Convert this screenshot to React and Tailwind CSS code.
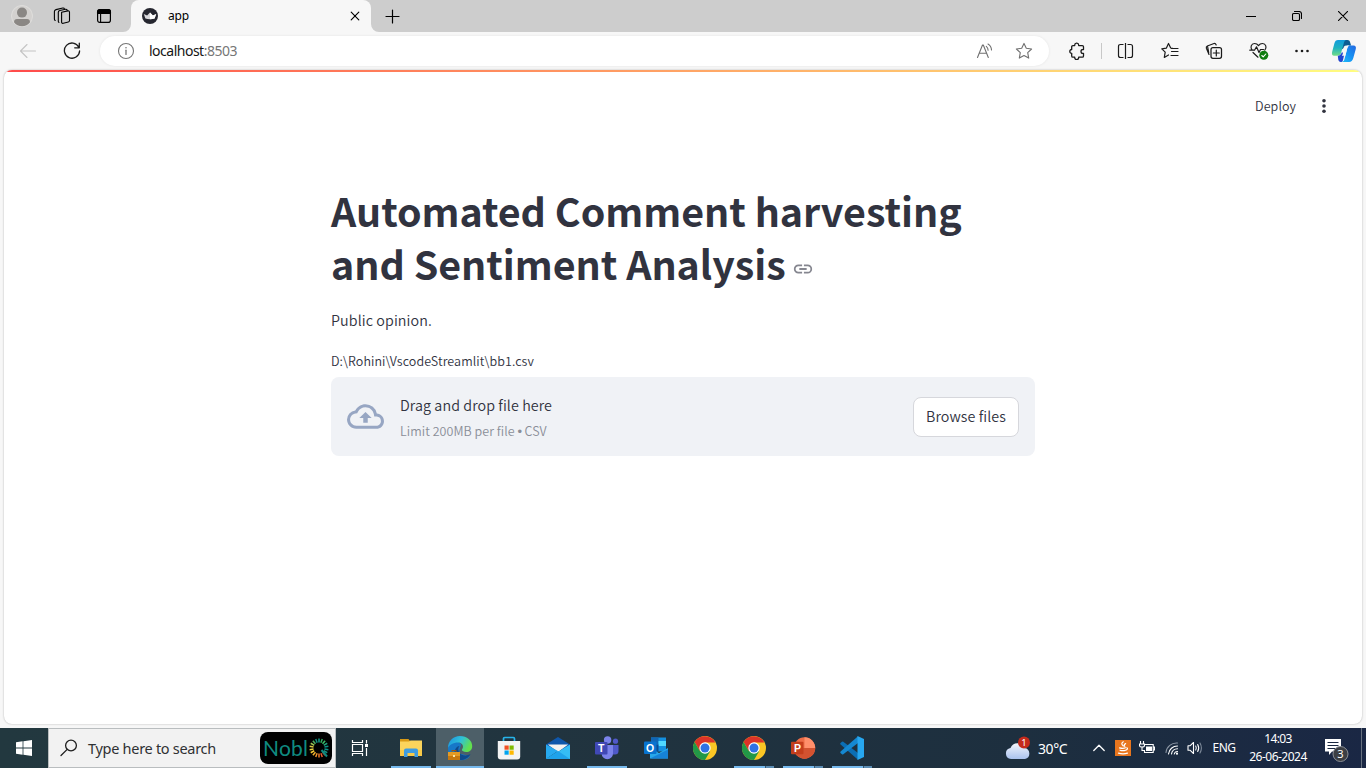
import React from "react";

const Slot = ({ className = "", children }) => (
  <div className={`flex shrink-0 items-center justify-center ${className}`}>{children}</div>
);

const Icon = ({ size = 18, className = "", children, viewBox }) => (
  <svg
    width={size}
    height={size}
    viewBox={viewBox || `0 0 ${size} ${size}`}
    className={`block shrink-0 ${className}`}
    fill="none"
    stroke="currentColor"
    strokeWidth="1.1"
    strokeLinecap="round"
    strokeLinejoin="round"
  >
    {children}
  </svg>
);

const ProfileIcon = () => (
  <Icon size={22}>
    <circle cx="11" cy="11" r="10.5" fill="#d3d1cf" stroke="#dddcda" />
    <circle cx="11" cy="7.6" r="5" fill="#8a8784" stroke="none" />
    <path d="M3 17.2c0-2 1.200-3.200 3-3.200h10c1.800 0 3 1.200 3 3.200a10 10 0 0 1-16 0z" fill="#8a8784" stroke="none" />
  </Icon>
);

const WorkspacesIcon = () => (
  <Icon size={18}>
    <path d="M8.600 5.300l6.300-1.400q1.600-.3 1.600 1.300v8.300q0 1.200-1.200 1.500l-5 1.300q-1.700.4-1.700-1.300z" />
    <path d="M14.200 3.500q-.2-1.500-1.700-1.200L6.800 3.500q-1.500.4-1.500 1.800v9q0 .8.700 1.100" />
    <path d="M11.400 1.900q-.3-1.200-1.600-.9L3 2.600Q1.400 3 1.400 4.600v7.500q0 1 .8 1.400" />
  </Icon>
);

const TabActionsIcon = () => (
  <Icon size={16}>
    <rect x="1.600" y="1.600" width="12.800" height="12.800" rx="2.200" strokeWidth="1.200" />
    <path d="M1.500 5.500V4a2.500 2.500 0 0 1 2.500-2.500h8A2.500 2.500 0 0 1 14.500 4v1.500z" fill="currentColor" stroke="currentColor" />
    <path d="M4.600 6v8" />
  </Icon>
);

const CrownIcon = () => (
  <Icon size={16}>
    <circle cx="8" cy="8" r="8" fill="#262730" stroke="none" />
    <path d="M1.800 6l3.300 1.400L8 4.400l2.900 3L14.200 6l-1.600 4.500c-2.800 1-6.400 1-9.200 0z" fill="#d9d9dc" stroke="none" />
    <path d="M8 4.400l2.900 3L14.200 6l-1.600 4.500c-1.400.5-3 .7-4.600.7z" fill="#fff" stroke="none" />
  </Icon>
);

const TitleBar = () => (
  <div className="flex h-8 w-full items-stretch bg-[#cdcdcd] text-black">
    <Slot className="w-[44px]"><ProfileIcon /></Slot>
    <Slot className="w-[36px]"><WorkspacesIcon /></Slot>
    <Slot className="w-[43px] pl-[5px]"><TabActionsIcon /></Slot>
    <svg width="8" height="32" viewBox="0 0 8 32" className="block shrink-0"><path d="M8 24a8 8 0 0 1-8 8h8z" fill="#f7f7f7" /></svg>
    <div className="flex w-[240px] items-center rounded-t-lg bg-[#f7f7f7] pl-[11px] pr-[11px]">
      <CrownIcon />
      <span className="ml-[10px] flex-1 font-['Noto_Sans',sans-serif] text-[12px] leading-4 tracking-[-0.2px]">app</span>
      <Icon size={10}><path d="M1.200 1.200l7.600 7.600M8.800 1.200l-7.600 7.600" strokeWidth="1.150" /></Icon>
    </div>
    <svg width="8" height="32" viewBox="0 0 8 32" className="block shrink-0"><path d="M0 24a8 8 0 0 0 8 8H0z" fill="#f7f7f7" /></svg>
    <Slot className="w-[27px]"><Icon size={15}><path d="M1 7.500h13M7.500 1v13" strokeWidth="1.200" /></Icon></Slot>
    <div className="flex-1" />
    <Slot className="w-[46px]"><Icon size={10}><path d="M0 5.500h10" strokeLinecap="butt" strokeWidth="1" /></Icon></Slot>
    <Slot className="w-[46px]">
      <Icon size={10}>
        <rect x=".5" y="2.500" width="7" height="7" rx="1.300" />
        <path d="M2.500.5H7A2.500 2.500 0 0 1 9.500 3v4.500" />
      </Icon>
    </Slot>
    <Slot className="w-[46px]"><Icon size={10}><path d="M.3.3l9.400 9.400M9.700.3L.3 9.700" /></Icon></Slot>
  </div>
);

const starPath = "M9 1.400l2.300 4.900 5.300.7-3.900 3.700 1 5.400L9 13.500l-4.700 2.600 1-5.400L1.400 7l5.300-.7z";

const CopilotIcon = () => (
  <svg width="26" height="24" viewBox="0 0 26 24" className="block shrink-0">
    <defs>
      <linearGradient id="cpA" x1="0" y1="0" x2="0" y2="1"><stop offset="0" stopColor="#129bdc" /><stop offset=".5" stopColor="#1fb2c0" /><stop offset="1" stopColor="#74dd86" /></linearGradient>
      <linearGradient id="cpB" x1="1" y1="0" x2="0" y2="1"><stop offset="0" stopColor="#2568e0" /><stop offset=".5" stopColor="#1691f3" /><stop offset="1" stopColor="#20bdf8" /></linearGradient>
    </defs>
    <path d="M11 1h5.500c1.500 0 2.200.9 2.600 2.200l1 3.300h-3.500l-6 4z" fill="#0c5c92" />
    <path d="M7 1h8c-1.400.6-1.800 1.800-2.300 3.500l-2.500 9c-.6 2.200-1.700 3.300-4.200 3.300H3.200C1.200 16.800.6 15 1.100 13L3.500 4C4.100 2 5.100 1 7 1z" fill="url(#cpA)" />
    <path d="M6.800 16.800c2.200-.2 3.200-1.200 3.900-3.300h3l-1.700 7.500c-.4 1.400-1 2-2 2h-.2c-1.500 0-2.200-1-2.500-2.200z" fill="#2446cf" />
    <path d="M18 6.500h4.500c2 0 2.800 1.500 2.300 3.500L22.300 19c-.8 2.800-2 4-4.200 4h-7.600c2-.4 2.600-1.500 3.100-3.300L16 10.200c.4-1.800 1-2.900 2-3.700z" fill="url(#cpB)" />
    <path d="M12.800 7.800q1-1.300 2.800-1.300H18c-1 .8-1.600 1.900-2 3.700l-1.700 6.500h-3.500q.8-1 1-2z" fill="#f7f7f7" />
  </svg>
);

const Toolbar = () => (
  <div className="flex h-[38px] w-full items-center bg-[#f7f7f7] text-[#1b1b1b]">
    <Slot className="w-[56px] text-[#c4c4c4]"><Icon size={18}><path d="M16.500 9H1.500M8 2.500L1.500 9 8 15.500" /></Icon></Slot>
    <Slot className="w-[32px]">
      <Icon size={18}><path d="M15.800 5.200A7.600 7.600 0 1 0 16.600 9M16.300 1.200v4.600h-4.600" strokeWidth="1.300" /></Icon>
    </Slot>
    <div className="ml-3 flex h-[30px] w-[949px] items-center rounded-full bg-white pl-[17px] shadow-[0_0_3px_rgba(0,0,0,0.08)]">
      <Icon size={18} className="text-[#767676]"><circle cx="9" cy="9" r="7.500" /><path d="M9 8.200v4.200" strokeWidth="1.300" /><circle cx="9" cy="5.800" r=".8" fill="currentColor" stroke="none" /></Icon>
      <span className="ml-[14px] flex-1 font-['Noto_Sans',sans-serif] text-[14px] leading-5 tracking-[-0.500px] text-[#151515]">
        localhost<span className="text-[#767676]">:8503</span>
      </span>
      <Slot className="w-[39px] text-[#707070]">
        <Icon size={18}><path d="M1.500 15.500L6.500 3h.8l5 12.500M3.400 11.200h7.200" /><path d="M10.300 4.300q1.800 1.500 1.800 4M12 2q3.300 2 3.500 6" /></Icon>
      </Slot>
      <Slot className="w-[39px] text-[#707070]"><Icon size={18}><path d={starPath} /></Icon></Slot>
      <div className="w-[6px]" />
    </div>
    <Slot className="w-[52px] pl-[4px]">
      <Icon size={18}>
        <path d="M6.700 3.300a2 2 0 0 1 4-.2v.5h3.600c.7 0 1.200.5 1.200 1.200v2.700h-.6a1.900 1.900 0 0 0 0 3.800h.6V14c0 .7-.5 1.200-1.200 1.200h-3.600v.4a2 2 0 0 1-4 0v-.4H4.900c-.7 0-1.200-.5-1.200-1.200v-2.700a1.900 1.900 0 1 1 0-3.800V4.800c0-.7.5-1.200 1.200-1.200h1.800z" strokeWidth="1.300" />
      </Icon>
    </Slot>
    <div className="h-4 w-px bg-[#c8c8c8]" />
    <Slot className="w-[46px]">
      <svg width="17" height="18" viewBox="0 0 17 18" fill="none" stroke="currentColor" className="ml-px block"><path d="M6.500 2.500H3.500q-2 0-2 2v9q0 2 2 2h3M10.500 2.500h3q2 0 2 2v9q0 2-2 2h-3M8.500 1v16" strokeWidth="1.200" /></svg>
    </Slot>
    <Slot className="w-[44px]">
      <Icon size={18}><path d="M11.500 6.300L9.700 6 7.500 1.500 5.300 6.200.8 6.800l3.400 3.400-.9 5.200L7.500 13M10.500 6.500h6.500M10.500 9.500h6.500M10 13.500h7" strokeWidth="1.200" /></Icon>
    </Slot>
    <Slot className="w-[44px]">
      <Icon size={18}><rect x="6" y="5.500" width="10.500" height="10.800" rx="2" strokeWidth="1.250" /><path d="M11.300 8v6M8.300 11h6M4 12.500L1.400 6.200q-.5-1.600.9-2.200L9 1.500q1.500-.3 2.200 1.500M3.700 10.500L2.500 4" strokeWidth="1.200" /></Icon>
    </Slot>
    <Slot className="w-[44px] pl-px">
      <Icon size={20}>
        <path d="M3.200 9.200C.8 6.500 2.200 2.500 5.500 2.500c2 0 3.200 1 4 2.200.8-1.200 2-2.200 4-2.200 3.300 0 4.700 4 2.300 6.700M4 11.500l5 4.700M.8 9.200h4.700L7.500 5.800 10 11.500 11.500 8.500h3" strokeWidth="1.200" />
        <circle cx="14.800" cy="14.300" r="4.500" fill="#107c10" stroke="none" />
        <path d="M12.800 14.500l1.400 1.300 2.600-2.800" stroke="#fff" />
      </Icon>
    </Slot>
    <Slot className="w-[43px]"><Icon size={16}><g fill="currentColor" stroke="none"><circle cx="2.500" cy="8" r="1.300" /><circle cx="8" cy="8" r="1.300" /><circle cx="13.500" cy="8" r="1.300" /></g></Icon></Slot>
    <Slot className="w-[42px]"><CopilotIcon /></Slot>
  </div>
);

const sourceSans = "font-['Noto_Sans_CJK_SC',sans-serif]";

const Uploader = () => (
  <div className="mt-[5px] flex h-[79px] items-center rounded-lg bg-[#f0f2f6] px-4">
    <svg width="37" height="37" viewBox="0 0 24 24" className="block shrink-0" fill="#97a6c3">
      <path d="M19.350 10.040A7.490 7.490 0 0 0 12 4C9.110 4 6.600 5.640 5.350 8.040A5.994 5.994 0 0 0 0 14c0 3.310 2.690 6 6 6h13c2.760 0 5-2.240 5-5 0-2.640-2.050-4.780-4.650-4.960zM19 18H6c-2.210 0-4-1.790-4-4 0-2.050 1.530-3.760 3.560-3.970l1.070-.11.5-.95A5.469 5.469 0 0 1 12 6c2.620 0 4.880 1.860 5.390 4.430l.3 1.500 1.530.11A2.980 2.980 0 0 1 22 15c0 1.650-1.350 3-3 3zM8 13h2.550v3h2.900v-3H16l-4-4z" />
    </svg>
    <div className="ml-4 flex flex-1 flex-col pt-[2px]">
      <span className="text-[14.300px] font-[350] leading-[26px] tracking-[0.080px]">Drag and drop file here</span>
      <span className="whitespace-pre text-[12.500px] font-[350] leading-[25px] tracking-[0.050px] text-[#8a8e98]">
        Limit 200MB per file <span className="font-['Liberation_Sans',sans-serif] text-[13px] font-normal tracking-[-0.4px]">•</span> CSV
      </span>
    </div>
    <button className="h-10 w-[106px] rounded-lg border border-[#d6d7dc] bg-white pb-[2px] text-[14.300px] font-[350] leading-6 tracking-[0.080px]">Browse files</button>
  </div>
);

const Page = () => (
  <div className="mx-1 flex h-[654px] flex-col overflow-hidden rounded-lg bg-white shadow-[0_0_2px_rgba(0,0,0,0.3)]">
    <div className="h-[2px] w-full bg-[linear-gradient(90deg,#ff4b4b,#fffd80)]" />
    <div className={`flex h-[68px] items-center justify-end pr-[30px] text-[#31333f] ${sourceSans}`}>
      <span className="text-[12.500px] font-[350] leading-5 tracking-[0.080px]">Deploy</span>
      <svg width="16" height="16" viewBox="0 0 16 16" fill="#31333f" className="ml-5 block"><circle cx="8" cy="2.700" r="1.800" /><circle cx="8" cy="8" r="1.800" /><circle cx="8" cy="13.300" r="1.800" /></svg>
    </div>
    <div className={`mx-auto flex w-[704px] flex-col pt-[43px] text-[#31333f] ${sourceSans}`}>
      <h1 className="whitespace-nowrap text-[39.400px] font-bold leading-[53px] tracking-[-0.040px]">
        <span className="block">Automated Comment harvesting</span>
        <span className="flex items-center">
          and Sentiment Analysis
          <svg width="22" height="22" viewBox="0 0 24 24" fill="#85868f" className="ml-[6px] mt-[13px] block"><path d="M3.900 12c0-1.710 1.390-3.100 3.100-3.100h4V7H7a5 5 0 0 0 0 10h4v-1.900H7c-1.710 0-3.100-1.390-3.100-3.100zM8 13h8v-2H8zm9-6h-4v1.900h4a3.100 3.100 0 0 1 0 6.200h-4V17h4a5 5 0 0 0 0-10z" /></svg>
        </span>
      </h1>
      <p className="mt-[19px] text-[14.300px] font-[350] leading-6 tracking-[0.100px]">Public opinion.</p>
      <p className="mt-[18px] text-[12.500px] font-[350] leading-[22px] tracking-[0.080px]">D:\Rohini\VscodeStreamlit\bb1.csv</p>
      <Uploader />
    </div>
  </div>
);

const ExplorerIcon = () => (
  <svg width="24" height="24" viewBox="0 0 24 24"><path d="M1 3h8.500L11 5h11v5H1z" fill="#d99a15" /><path d="M1 5.500h9L11.500 4.500H23V20H1z" fill="#fbd45c" /><path d="M1 14h22v6H1z" fill="#f7c948" /><path d="M5 21v-6.500q0-2 2-2h10q2 0 2 2V21h-3.500v-4h-7v4z" fill="#3d9be0" /></svg>
);

const EdgeIcon = () => (
  <svg width="26" height="26" viewBox="0 0 26 26">
    <defs>
      <linearGradient id="eg" x1="0" y1="0" x2="1" y2=".4"><stop offset="0" stopColor="#1b8fe0" /><stop offset=".55" stopColor="#2fc1d8" /><stop offset="1" stopColor="#62e04e" /></linearGradient>
    </defs>
    <path d="M1 14C1 9 5 6.500 9 6.500c2 0 4 1 5 3l-2 9 11 2.500c-2 3-5.500 4.200-9 4.200C6 25.200 1 20 1 14z" fill="#1778c8" />
    <path d="M1 13C1 6 6 1 13 1c7 0 12.200 4.500 12.200 10 0 4-2.700 6-6 6-2.600 0-4.400-.9-4.400-2 0-.9 1.200-1.200 1.200-3.300 0-2.500-2.200-4.200-5-4.200C6 7.500 2 10 1 13z" fill="url(#eg)" />
    <path d="M12.500 11c-2 2-1.500 6.500 2 8.500 3 1.500 6.500 1 9-.5-2 4-6 6-10 6-4.500-1-7-6-5.500-10 .9-2.400 3-4 4.500-4z" fill="#104a8c" />
    <path d="M14.800 14.500c-.2 1.800 2 2.800 5 2.500-2 1.400-5.800 1.200-7-1-.6-1.600.2-3.500 1.500-4.500.9 1 .8 1.800.5 3z" fill="#4b5f69" />
    <rect x="1" y="17" width="12" height="8" fill="#c6780f" /><rect x="1" y="17" width="12" height="4" fill="#e39a24" /><rect x="6" y="20" width="2" height="2" fill="#fbe3a4" /><path d="M5 17v-1.500h4V17" fill="none" stroke="#a55b08" />
  </svg>
);

const StoreIcon = () => (
  <svg width="24" height="24" viewBox="0 0 24 24"><path d="M6.500 6V2.700q0-1.200 1.200-1.200h8.600q1.200 0 1.200 1.200V6" fill="none" stroke="#27b4ea" strokeWidth="1.700" /><path d="M.8 5h22.400v15.500q0 3-3 3H3.800q-3 0-3-3z" fill="#f3f3f3" /><path d="M7.500 9.500h4.200v4.200H7.500z" fill="#f25022" /><path d="M12.500 9.500h4.200v4.200h-4.200z" fill="#7fba00" /><path d="M7.500 14.500h4.200v4.200H7.500z" fill="#00a4ef" /><path d="M12.500 14.500h4.200v4.200h-4.200z" fill="#ffb900" /></svg>
);

const MailIcon = () => (
  <svg width="24" height="24" viewBox="0 0 24 24"><path d="M0 8.500L12 1l12 7.500v5H0z" fill="#0f57ab" /><path d="M1.800 8.500h20.400L12 16z" fill="#f4f2f0" /><path d="M0 8.500l12 6.500-12 8z" fill="#27a9ef" /><path d="M24 8.500L0 23h24z" fill="#35bdf5" /><path d="M0 23l12-8 12 8z" fill="#1fa2ea" /></svg>
);

const TeamsIcon = () => (
  <svg width="26" height="24" viewBox="0 0 26 24"><circle cx="21.500" cy="5.200" r="2.600" fill="#5059c9" /><path d="M17 9h7.500v6q0 3.600-3.600 3.600H17z" fill="#4f59ca" /><circle cx="13.600" cy="4" r="3.700" fill="#7b83eb" /><path d="M8 9h11v8.500a5.700 5.700 0 0 1-11.400 0z" fill="#7b83eb" /><rect x="1" y="6" width="12.500" height="12.500" rx="1" fill="#4048b5" /><text x="7.250" y="16" textAnchor="middle" fontSize="10.500" fontWeight="700" fontFamily="Liberation Sans, sans-serif" fill="#fff">T</text></svg>
);

const OutlookIcon = () => (
  <svg width="26" height="24" viewBox="0 0 26 24"><rect x="8" y="1.500" width="15" height="14" fill="#1490df" /><rect x="8" y="1.500" width="7.500" height="7" fill="#1066b5" /><rect x="15.500" y="5" width="7.500" height="5" fill="#50d9ff" /><rect x="8" y="8.500" width="7.500" height="7" fill="#0a4b91" /><path d="M7 12l9 5 9-5v10.500H7z" fill="#28a8ea" /><path d="M7 22.500l18-9v9z" fill="#1683d8" /><rect x="1" y="5.500" width="12.500" height="12.500" rx="1" fill="#0873cf" /><text x="7.200" y="15.500" textAnchor="middle" fontSize="10.500" fontWeight="700" fontFamily="Liberation Sans, sans-serif" fill="#fff">O</text></svg>
);

const ChromeIcon = () => (
  <svg width="24" height="24" viewBox="0 0 24 24"><circle cx="12" cy="12" r="12" fill="#fbc624" /><path d="M1.600 6A12 12 0 0 1 22.400 6.500H12l-5.200 8.500z" fill="#dc3328" /><path d="M1.600 6A12 12 0 0 0 12 24l5-8.500L12 12l-5.200 3z" fill="#229847" /><circle cx="12" cy="12" r="5.700" fill="#fff" /><circle cx="12" cy="12" r="4.500" fill="#2f72e4" /></svg>
);

const PowerPointIcon = () => (
  <svg width="26" height="24" viewBox="0 0 26 24"><circle cx="14.500" cy="12" r="10.700" fill="#ed6c47" /><path d="M14.500 1.300A10.700 10.700 0 0 1 25.200 12H14.500z" fill="#ff8f6b" /><path d="M3.800 12h21.400a10.700 10.700 0 0 1-21.400 0z" fill="#d35230" /><rect x="1" y="5.700" width="12.500" height="12.500" rx="1" fill="#c43e1c" /><text x="7.400" y="15.700" textAnchor="middle" fontSize="10.500" fontWeight="700" fontFamily="Liberation Sans, sans-serif" fill="#fff">P</text></svg>
);

const VsCodeIcon = () => (
  <svg width="24" height="24" viewBox="0 0 24 24"><path d="M.5 7l1.500-1.300q.6-.5 1.300 0L18 17v6.800L.6 8.400q-.7-.7-.1-1.400z" fill="#0b6eb4" /><path d="M.5 17l1.500 1.300q.6.5 1.300 0L18 7V.2L.6 15.600q-.7.700-.1 1.400z" fill="#1588d1" /><path d="M17.500 0L24 3v18l-6.500 3z" fill="#27a7f0" /></svg>
);

const apps = [
  { name: "Explorer", icon: ExplorerIcon, state: "open" },
  { name: "Edge", icon: EdgeIcon, state: "active" },
  { name: "Store", icon: StoreIcon },
  { name: "Mail", icon: MailIcon },
  { name: "Teams", icon: TeamsIcon, state: "open" },
  { name: "Outlook", icon: OutlookIcon },
  { name: "Chrome", icon: ChromeIcon },
  { name: "ChromeProfile", icon: ChromeIcon, state: "stack" },
  { name: "PowerPoint", icon: PowerPointIcon, state: "stack" },
  { name: "Code", icon: VsCodeIcon, state: "stack" },
];

const AppButton = ({ app }) => {
  const Glyph = app.icon;
  return (
    <div className={`mr-px flex w-12 shrink-0 flex-col items-center ${app.state === "active" ? "bg-[#4d5f68]" : ""}`}>
      <div className="flex h-[38px] items-center justify-center pt-[2px]"><Glyph /></div>
      {app.state === "active" && <div className="h-[2px] w-12 bg-[#76b9ed]" />}
      {app.state === "open" && <div className="h-[2px] w-10 bg-[#76b9ed]" />}
      {app.state === "stack" && (
        <div className="flex h-[2px] w-10"><div className="w-[31px] bg-[#76b9ed]" /><div className="w-px bg-[#38566e]" /><div className="w-2 bg-[#5b8cb3]" /></div>
      )}
    </div>
  );
};

const raysOf = [
  "#0fa08a", "#2fae62", "#3cc06a", "#1f9d78", "#0d9488", "#0d9488", "#148f80", "#d1402b",
  "#ea5a2c", "#f07a2b", "#f4942b", "#f6b22c", "#f3c935", "#e9d33f", "#d8c844", "#9cc050", "#4cb060", "#109080",
];

const NobliqLogo = () => (
  <div className="mr-[3px] flex h-8 w-[72px] items-center rounded-lg bg-black pl-[3px]">
    <span className="w-[45px] font-['Lato',sans-serif] text-[21px] leading-6 tracking-[0.2px] text-[#0f8b80]">Nobl</span>
    <svg width="22" height="22" viewBox="-11 -11 22 22" className="block" strokeWidth="1.500">
      {raysOf.map((c, i) => (
        <g key={i} transform={`rotate(${i * 20})`}><path d="M0-5.500V-9.500" stroke={c} /></g>
      ))}
      <path d="M2.500 2l5.500 6.500" stroke="#0f8b80" strokeWidth="2" />
    </svg>
  </div>
);

const TrayText = ({ className = "", children }) => (
  <span className={`whitespace-nowrap font-['Noto_Sans',sans-serif] text-white ${className}`}>{children}</span>
);

const Taskbar = () => (
  <div className="flex h-10 w-full items-stretch overflow-hidden bg-[linear-gradient(90deg,#22383f,#21343f_40%,#1d2f3f_75%,#1a2744)]">
    <Slot className="w-12"><svg width="16" height="16" viewBox="0 0 16 16" fill="#fff"><path d="M0 2.200l6.600-.9v6.300H0zM7.400 1.200L16 0v7.600H7.400zM0 8.400h6.600v6.300L0 13.800zM7.400 8.400H16V16l-8.600-1.200z" /></svg></Slot>
    <div className="flex w-[288px] items-center border border-[#b9bdbf] bg-[#f2f2f2] pl-[11px]">
      <Icon size={18} className="text-[#1f1f1f]"><circle cx="11" cy="6.500" r="5.400" strokeWidth="1.300" /><path d="M7.200 10.400L1 16.500" strokeWidth="1.300" /></Icon>
      <span className="ml-[10px] flex-1 whitespace-nowrap font-['Noto_Sans',sans-serif] text-[14.500px] leading-5 tracking-[-0.290px] text-[#2f3133]">Type here to search</span>
      <NobliqLogo />
    </div>
    <Slot className="w-[51px] pr-[3px]">
      <svg width="18" height="18" viewBox="0 0 18 18" fill="none" stroke="#fff" strokeWidth="1.200"><path d="M1.500 1v2.500h10V1M1.500 17v-2.500h10V17M1.500 5.500h10v7h-10zM15.500 1v3.500M15.500 9v8" /><path d="M14 5h3v3h-3z" fill="#fff" stroke="none" /></svg>
    </Slot>
    {apps.map((app) => <AppButton key={app.name} app={app} />)}
    <div className="flex-1" />
    <Slot className="w-[26px]">
      <svg width="26" height="26" viewBox="0 0 26 26"><defs><linearGradient id="cl" x1="0" y1="0" x2="0" y2="1"><stop offset="0" stopColor="#f3f6fc" /><stop offset="1" stopColor="#a9c2ee" /></linearGradient></defs><path d="M6 24a5.500 5.500 0 0 1-.5-10.900A7.500 7.500 0 0 1 19.500 13 5.600 5.600 0 0 1 20 24z" fill="url(#cl)" /><circle cx="19" cy="7.500" r="6" fill="#c42b1c" /><text x="19" y="11" textAnchor="middle" fontSize="9.500" fontFamily="Noto Sans, sans-serif" fill="#fff">1</text></svg>
    </Slot>
    <div className="flex w-[54px] items-center pl-[7px]"><TrayText className="text-[14px] tracking-[-0.4px]">30°C</TrayText></div>
    <Slot className="w-[26px] pl-[2px]"><Icon size={12} className="text-white"><path d="M.8 8.500L6 3.300l5.200 5.200" strokeWidth="1.300" /></Icon></Slot>
    <Slot className="w-[24px]">
      <svg width="16" height="16" viewBox="0 0 16 16" fill="none" stroke="#fff" strokeWidth="1.200" strokeLinecap="round"><path d="M0 0h16v16H0z" fill="#e8761e" stroke="none" /><path d="M8.300 1.800q-3 1.800 0 4.200M10.600 3.600q-2.200 1-.8 2.700M4.500 7.800q3.500 1 6 0M5 10.200q3 1 5.500 0M11.800 7.800q1.600 1-.6 2.200M3.500 13.200q4.500 1.200 9 0" /></svg>
    </Slot>
    <Slot className="w-[24px]">
      <svg width="16" height="14" viewBox="0 0 16 14" fill="none" stroke="#fff" strokeWidth="1.100"><path d="M5.500 3.500h8.700v8H5.500V9M14.500 6h1v3h-1" /><path d="M7 5.500h6v4.500H7z" fill="#fff" stroke="none" /><path d="M1.500 0v3M4.500 0v3M.5 3h5v1.500q0 1.500-2.500 1.500T.5 4.500zM3 6v3.500h2.500" /></svg>
    </Slot>
    <Slot className="w-[24px] pl-px">
      <Icon size={14} className="text-white"><path d="M1 11.500A10.500 10.500 0 0 1 12.500 2" stroke="#8b96a4" /><path d="M3.500 13A9 9 0 0 1 12.500 5M6.500 13a6 6 0 0 1 6-5.200M9.300 13a3.200 3.200 0 0 1 3.200-2.500" /><circle cx="12" cy="12.700" r="1.100" fill="#fff" stroke="none" /></Icon>
    </Slot>
    <Slot className="w-[23px]">
      <Icon size={16} className="text-white"><path d="M1 5.700h2.200L6.500 2.500v11L3.200 10.300H1z" /><path d="M8.700 6q1.200 2 0 4M10.700 4.500q2 3.500 0 7" /><path d="M13 3q2.800 5 0 10" stroke="#7d8999" /></Icon>
    </Slot>
    <Slot className="w-[36px]"><TrayText className="text-[12px] tracking-[-0.5px]">ENG</TrayText></Slot>
    <div className="flex w-[72px] flex-col items-center pt-[2px]">
      <TrayText className="text-[12px] leading-[18px] tracking-[-0.6px]">14:03</TrayText>
      <TrayText className="text-[12px] leading-[18px] tracking-[-0.5px]">26-06-2024</TrayText>
    </div>
    <div className="flex w-[47px] items-center pl-[10px]">
      <svg width="28" height="28" viewBox="0 0 28 28"><path d="M1 5h16v12.500h-9l-3 3.500v-3.500H1z" fill="#fff" /><path d="M3.500 8.500h11M3.500 11.500h11M3.500 14.500h8" stroke="#1b2942" strokeWidth="1" /><circle cx="16.500" cy="20" r="7.500" fill="#3c3f44" stroke="#8c9096" /><text x="16.500" y="24" textAnchor="middle" fontSize="11" fontFamily="Noto Sans, sans-serif" fill="#fff">3</text></svg>
    </div>
    <div className="mr-1 w-px bg-[#67717f]" />
  </div>
);

export default function App() {
  return (
    <div className="flex h-[768px] w-[1366px] flex-col overflow-hidden bg-[#f7f7f7]">
      <TitleBar />
      <Toolbar />
      <Page />
      <div className="h-1 shrink-0" />
      <Taskbar />
    </div>
  );
}
